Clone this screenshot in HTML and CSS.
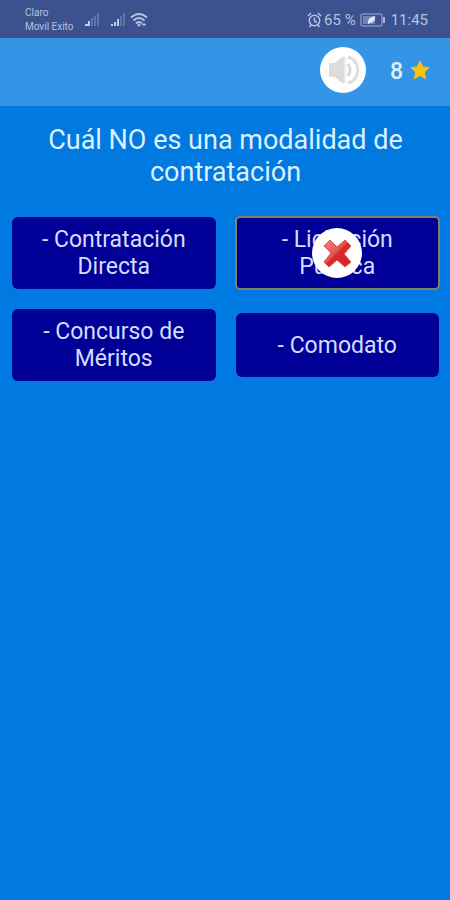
FILE: index.html
```html
<!DOCTYPE html>
<html lang="es">

<head>
	<meta charset="UTF-8" />
	<meta name="viewport" content="width=device-width, initial-scale=1.0" />
	<title>Trivia</title>
	<link rel="stylesheet" href="styles.css">
</head>

<body>
	<div class="status-bar">
		<div class="carrier">Claro<br />Movil Exito</div>
		<svg class="signal" width="16" height="14" viewBox="0 0 16 14">
			<path d="M1 11h3v2H1zM4 8h2v5H4z" fill="#c3cdea" />
			<path d="M7 5h2v8H7zM10 3h2v10h-2zM13 0h2v13h-2z" fill="#5f73ac" />
		</svg>
		<svg class="signal" width="16" height="14" viewBox="0 0 16 14">
			<path d="M1 11h2v2H1zM4 9h2v4H4zM7 6h2v7H7z" fill="#c3cdea" />
			<path d="M10 3h2v10h-2zM13 0h2v13h-2z" fill="#5f73ac" />
		</svg>
		<svg class="wifi" width="18" height="16" viewBox="0 0 18 16" fill="none" stroke="#b6c1e2" stroke-width="2">
			<path d="M1 5.500Q9-1.500 17 5.500M3.500 8.500Q9 3.500 14.500 8.500M6 11.500Q9 8.500 12 11.500" />
			<circle cx="9" cy="13" r="1.500" fill="#b6c1e2" stroke="none" />
			<path d="M12 12.500h4M14 10.500v4" stroke-width="1" />
		</svg>
		<div class="status-right">
			<svg width="15" height="16" viewBox="0 0 15 16" fill="none" stroke="#b6c1e2" stroke-width="1.500">
				<circle cx="7.500" cy="8.500" r="5.200" />
				<path d="M1 4l3-3M14 4l-3-3M7.500 5.500v3.500l2.500 1.500M4 13l-1.500 2M11 13l1.500 2" />
			</svg>
			<span>65 %</span>
			<svg class="battery" width="26" height="14" viewBox="0 0 26 14">
				<rect x="1" y="1" width="21" height="12" rx="2" fill="none" stroke="#8191bf" stroke-width="1.500" />
				<rect x="3" y="3" width="12" height="8" fill="#7284b8" />
				<path d="M23 4h2v6h-2z" fill="#a9b5da" />
				<path d="M8 11Q7 4 15 3Q16 9 10 10z" fill="#dfe6f7" />
			</svg>
			<span>11:45</span>
		</div>
	</div>

	<header class="top-bar">
		<button type="button" class="sound" aria-label="Sonido">
			<svg width="46" height="46" viewBox="0 0 46 46">
				<path d="M9 17q0-1 1-1h5l7-6q2-1 2 1v24q0 2-2 1l-7-6h-5q-1 0-1-1z" fill="#dcdcdc" />
				<path d="M25 10v26" stroke="#ececec" stroke-width="2" />
				<path d="M28 17Q32 23 28 29" fill="none" stroke="#d8d8d8" stroke-width="3" />
				<path d="M28 10C41 13 41 33 28 36" fill="none" stroke="#dedede" stroke-width="3" />
			</svg>
		</button>
		<span class="score">8</span>
		<svg class="star" width="20" height="20" viewBox="0 0 20 20">
			<path d="M10 1l2.800 5.900 6.200.800-4.600 4.400 1.200 6.600L10 15.500l-5.600 3.200 1.200-6.600L1 7.700l6.200-.800z" fill="#fbc20f" stroke="#fbc20f" stroke-linejoin="round" />
		</svg>
	</header>

	<main>
		<h1>Cuál NO es una modalidad de contratación</h1>

		<div class="answers">
			<button type="button" class="answer">- Contratación Directa</button>
			<button type="button" class="answer selected">- Licitación Pública
				<svg class="wrong" width="50" height="50" viewBox="0 0 50 50">
					<defs>
						<linearGradient id="red" x1="0" y1="0" x2="1" y2="1">
							<stop offset="0" stop-color="#f0877f" />
							<stop offset=".45" stop-color="#e45450" />
							<stop offset=".5" stop-color="#d92a2b" />
							<stop offset="1" stop-color="#cf2428" />
						</linearGradient>
					</defs>
					<circle cx="25" cy="25" r="25" fill="#fff" />
					<path d="M18 12l7 7 8-7 6 6-7 8 7 8-6 5-8-7-8 7-5-5 7-9-7-7z" fill="url(#red)" stroke="#d9534d" stroke-width="1" stroke-linejoin="round" />
				</svg>
			</button>
			<button type="button" class="answer">- Concurso de Méritos</button>
			<button type="button" class="answer">- Comodato</button>
		</div>
	</main>
</body>

</html>
```

FILE: styles.css
```css
* {
	box-sizing: border-box;
}

body {
	margin: 0;
	min-height: 100vh;
	background-color: #0079e0;
	color: #dcf1ff;
	font-family: Roboto, "Liberation Sans", sans-serif;
}

button {
	border: none;
	padding: 0;
	font-family: inherit;
}

svg {
	display: block;
	flex-shrink: 0;
}

/* phone status bar */
.status-bar {
	display: flex;
	align-items: center;
	height: 38px;
	padding: 2px 22px 0 25px;
	background-color: #3c528f;
	color: #b6c1e2;
}

.carrier {
	font-size: 10px;
	line-height: 14px;
}

.signal {
	margin-left: 10px;
}

.wifi {
	margin-left: 4px;
}

.status-right {
	display: flex;
	align-items: center;
	margin-left: auto;
	font-size: 15px;
}

.status-right span {
	margin-left: 2px;
}

.status-right .battery {
	margin: 0 3px 0 4px;
}

/* sound and score */
.top-bar {
	display: flex;
	align-items: center;
	justify-content: flex-end;
	height: 68px;
	padding: 0 20px 4px 20px;
	background-color: #3494e5;
}

.sound {
	width: 46px;
	height: 46px;
	border-radius: 50%;
	background-color: #fff;
}

.score {
	margin: 2px 7px 0 24px;
	font-size: 23px;
	font-weight: 500;
}

main {
	padding: 18px 11px 18px 12px;
}

h1 {
	margin: 0 24px 29px;
	font-size: 27px;
	font-weight: 400;
	line-height: 32px;
	text-align: center;
}

.answers {
	display: grid;
	grid-template-columns: 1fr 1fr;
	gap: 20px;
	align-items: center;
}

.answer {
	position: relative;
	min-height: 64px;
	padding: 9px 24px;
	border-radius: 6px;
	background-color: #000096;
	color: #d6dcff;
	font-size: 23px;
	line-height: 27px;
}

.selected {
	outline: 2px solid #80806c;
	outline-offset: -1px;
	border-radius: 4px;
}

/* mark over the chosen answer */
.wrong {
	position: absolute;
	top: 50%;
	left: 50%;
	transform: translate(-50%, -50%);
}
```
